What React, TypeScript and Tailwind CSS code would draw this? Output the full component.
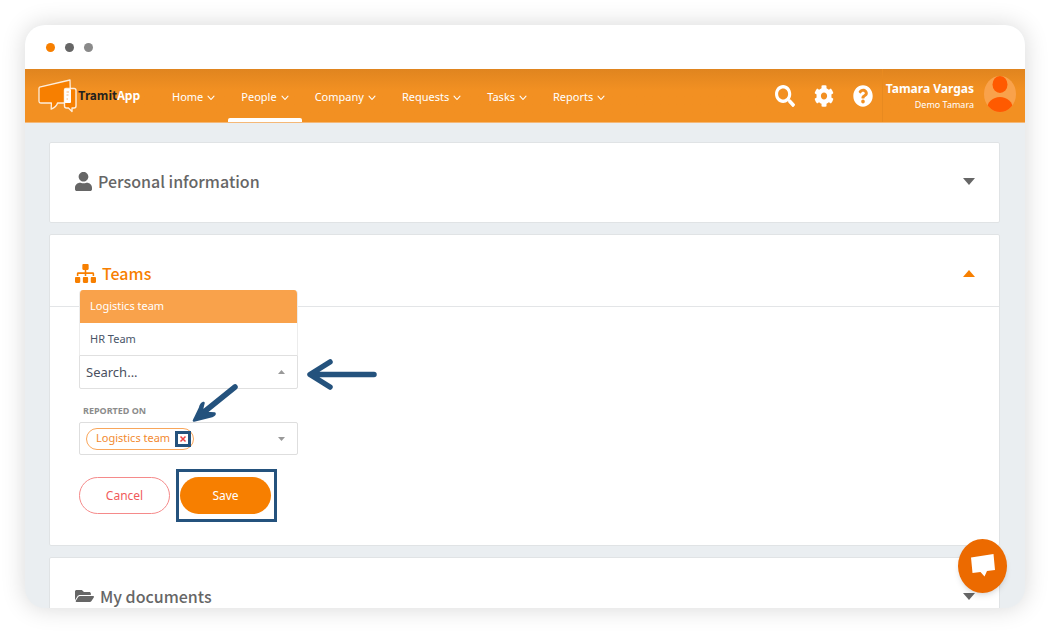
import type { ReactNode, SVGProps } from "react";
import { FaCog, FaFolderOpen, FaQuestionCircle, FaSearch, FaSitemap, FaUser } from "react-icons/fa";

const NAV = ["Home", "People", "Company", "Requests", "Tasks", "Reports"];
const ACTIVE = "People";

function Triangle({ up, ...props }: { up?: boolean } & SVGProps<SVGSVGElement>) {
  return (
    <svg viewBox="0 0 12 7" fill="currentColor" preserveAspectRatio="none" aria-hidden="true" {...props}>
      <path d={up ? "M6 0L12 7H0z" : "M0 0H12L6 7z"} />
    </svg>
  );
}

function Chevron() {
  return (
    <svg viewBox="0 0 8 6" className="mt-px h-1.5 w-2" fill="none" stroke="currentColor" strokeWidth="1.1" aria-hidden="true">
      <path d="M1 1.2L4 4.5L7 1.2" strokeLinecap="round" />
    </svg>
  );
}

function Logo() {
  return (
    <a href="#" className="flex items-center" aria-label="TramitApp">
      <svg viewBox="0 0 40 34" className="h-[34px] w-10 shrink-0" aria-hidden="true">
        <path d="M1.5 8.2L32 1L32.6 24H19.5Q18.5 28 13.2 30.2L13.4 24H3Q1 24 1 22V9.5Q1 8.5 1.5 8.2z" fill="#f77f00" stroke="#fff" strokeOpacity=".85" strokeWidth="1.3" strokeLinejoin="round" />
        <path d="M28 9.5H36Q38 9.5 38 11.5V27Q38 29 36 29H34V32.5L30.5 29H28.5Q26.5 29 26.5 27V11Q26.5 9.5 28 9.5z" fill="#f77f00" stroke="#fff" strokeOpacity=".85" strokeWidth="1.4" strokeLinejoin="round" />
        <rect x="26.5" y="10" width="6.5" height="14" rx="1" fill="#fff" />
        <path d="M28.5 13H31M28.5 16H30.5M28.5 20H30" stroke="#f9b87a" strokeWidth="1.2" />
      </svg>
      <span className="pb-0.5 font-['Noto_Sans_CJK_SC','Noto_Sans',sans-serif] text-xs leading-5 font-bold">
        <span className="text-[#23211e]">Tramit</span>
        <span className="text-white">App</span>
      </span>
    </a>
  );
}

function Header() {
  return (
    <header className="flex h-[54px] shrink-0 justify-between border-b border-[#f5b877] bg-[#f29022] bg-linear-to-b from-[#e0851f] to-[#f29022] to-40% pr-[9px] pl-[13px] text-white">
      <div className="flex">
        <div className="flex w-[121px] items-center">
          <Logo />
        </div>
        <nav className="flex">
          {NAV.map((item) => (
            <a key={item} href="#" className="relative flex items-center gap-1 px-[13px] pt-1 text-[11px]">
              {item}
              <Chevron />
              {item === ACTIVE && <span className="absolute inset-x-0 bottom-0 h-1 rounded-t-xs bg-white" />}
            </a>
          ))}
        </nav>
      </div>
      <div className="flex">
        <div className="flex items-center gap-[19px] pr-[9px]">
          <button type="button" aria-label="Search">
            <FaSearch className="h-[22px] w-5" preserveAspectRatio="none" />
          </button>
          <button type="button" aria-label="Settings">
            <FaCog className="h-[22px] w-5" preserveAspectRatio="none" />
          </button>
          <button type="button" aria-label="Help">
            <FaQuestionCircle className="h-[22px] w-5" preserveAspectRatio="none" />
          </button>
        </div>
        <div className="flex items-center gap-2.5 border-l border-[#e88a20] pl-[3px]">
          <div className="pt-0.5 text-right">
            <div className="text-xs leading-4 font-bold">Tamara Vargas</div>
            <div className="text-[9px] leading-4">Demo Tamara</div>
          </div>
          <svg viewBox="0 0 32 36" className="mb-1 h-9 w-8" aria-hidden="true">
            <clipPath id="avatar">
              <ellipse cx="16" cy="18" rx="16" ry="18" />
            </clipPath>
            <g clipPath="url(#avatar)">
              <rect width="32" height="36" fill="#f9a24b" />
              <ellipse cx="16" cy="8.5" rx="7.5" ry="8.5" fill="#ff5a00" />
              <ellipse cx="16" cy="33" rx="13" ry="12" fill="#ff5a00" />
            </g>
          </svg>
        </div>
      </div>
    </header>
  );
}

function Panel({ title, icon, open, children }: { title: string; icon: ReactNode; open?: boolean; children?: ReactNode }) {
  return (
    <section className="shrink-0 rounded-xs border border-[#e0e3e5] bg-white">
      <h2 className={open ? "border-b border-[#e3e5e7] pt-[22px] pb-[17px] text-[#f77f00]" : "pt-[22px] pb-[25px] text-[#666]"}>
        <button type="button" aria-expanded={!!open} className="flex h-8 w-full items-center gap-1.5 pr-6 pl-[25px] font-['Noto_Sans_CJK_SC','Noto_Sans',sans-serif] text-base font-medium">
          {icon}
          {title}
          <Triangle up={open} className="ml-auto h-[7px] w-3" />
        </button>
      </h2>
      {children}
    </section>
  );
}

function TeamsForm() {
  return (
    <form className="relative mt-12 mb-[23px] ml-[29px] w-[219px] text-xs" onSubmit={(e) => e.preventDefault()}>
      <ul role="listbox" aria-label="Teams" className="absolute inset-x-0 bottom-full overflow-hidden rounded-t-sm border-x border-[#ececec] bg-white text-[11px]">
        <li role="option" aria-selected="true" className="-mx-px h-[33px] bg-[#f9a24b] pl-[11px] leading-8 text-white">
          Logistics team
        </li>
        <li role="option" aria-selected="false" className="h-8 pl-2.5 leading-8 text-[#4a5568]">
          HR Team
        </li>
      </ul>
      <div className="flex h-[34px] items-center rounded-b-xs border border-[#e0e0e0] pr-3 pl-1.5">
        <input aria-label="Search teams" placeholder="Search..." className="min-w-0 flex-1 pt-0.5 text-[13px] outline-none placeholder:text-[#4a5060]" />
        <Triangle up className="h-1 w-[7px] text-[#999]" />
      </div>

      <label htmlFor="reported" className="mt-3 block pl-1 text-[9px] leading-5 font-bold text-[#8c8c8c]">
        REPORTED ON
      </label>
      <div className="mt-px flex h-[33px] items-center rounded-xs border border-[#dedede] pr-3 pl-1.5">
        <span className="flex h-[22px] w-[108px] shrink-0 items-center justify-between rounded-full border border-[#f9a65a] pr-0.5 pl-[9px] text-[11px] whitespace-nowrap text-[#f28a30]">
          Logistics team
          <button type="button" aria-label="Remove Logistics team" className="flex size-4 shrink-0 items-center justify-center border-3 border-[#24527d] bg-white text-[#ef4444]">
            <svg viewBox="0 0 8 8" className="size-2" stroke="currentColor" strokeWidth="1.5" aria-hidden="true">
              <path d="M1.5 1.5L6.5 6.5M6.5 1.5L1.5 6.5" />
            </svg>
          </button>
        </span>
        <input id="reported" className="min-w-0 flex-1 outline-none" />
        <Triangle className="h-1 w-[7px] text-[#999]" />
      </div>

      <div className="mt-3.5 flex gap-1.5">
        <button type="button" className="my-2 h-[37px] w-[91px] shrink-0 rounded-full border border-[#f58a8a] text-[#f05b5b]">
          Cancel
        </button>
        <div className="h-[53px] w-[101px] shrink-0 border-3 border-[#24527d] pt-[5px] pl-px">
          <button type="submit" className="h-[37px] w-[91px] rounded-full bg-[#f77f00] text-white">
            Save
          </button>
        </div>
      </div>

      {/* hand-drawn pointers */}
      <svg viewBox="0 0 72 34" className="absolute top-[3px] left-[227px] h-[34px] w-[72px]" fill="none" stroke="#24527d" strokeLinecap="round" strokeLinejoin="round" aria-hidden="true">
        <path d="M68 16.5H6M24 4L4 16.5L24 29" strokeWidth="5.5" />
      </svg>
      <svg viewBox="0 0 48 40" className="absolute top-7 left-[113px] h-10 w-12" fill="none" stroke="#24527d" strokeLinecap="round" strokeLinejoin="round" aria-hidden="true">
        <path d="M43 4L12 29" strokeWidth="5.5" />
        <path d="M11.5 20Q9 21 8 25L2 37.5L20 33Q23 32 22.5 30.5L15 30L10 26z" fill="#24527d" strokeWidth="2.5" />
      </svg>
    </form>
  );
}

export default function App() {
  return (
    <div className="h-screen bg-white py-[25px] pr-9 pl-[25px] font-['Noto_Sans',sans-serif]">
      <div className="relative flex h-full flex-col overflow-hidden rounded-[20px] bg-[#eaeef1] shadow-[0_0_24px_rgba(0,0,0,0.16)]">
        <div className="flex h-11 shrink-0 items-center gap-2.5 bg-white pl-[21px]">
          <span className="size-[9px] rounded-full bg-[#f77f00]" />
          <span className="size-[9px] rounded-full bg-[#666]" />
          <span className="size-[9px] rounded-full bg-[#8a8a8a]" />
        </div>
        <Header />
        <main className="flex min-h-0 flex-1 flex-col gap-[11px] overflow-hidden pt-[19px] pr-[25px] pl-6">
          <Panel title="Personal information" icon={<FaUser className="h-[19px] w-[17px]" preserveAspectRatio="none" />} />
          <Panel title="Teams" open icon={<FaSitemap className="h-[19px] w-[21px]" preserveAspectRatio="none" />}>
            <TeamsForm />
          </Panel>
          <Panel title="My documents" icon={<FaFolderOpen className="h-4 w-[19px]" preserveAspectRatio="none" />} />
        </main>
        <button type="button" aria-label="Open chat" className="absolute right-[18px] bottom-[15px] flex h-[54px] w-[49px] items-center justify-center rounded-[50%] bg-[#ec6a00] shadow-md">
          <svg viewBox="0 0 24 24" className="size-6" fill="#fff" aria-hidden="true">
            <path d="M0 3.5L22.5 0L24 16L16 17L13.5 22.5L9.5 18L1.5 19z" />
          </svg>
        </button>
      </div>
    </div>
  );
}
